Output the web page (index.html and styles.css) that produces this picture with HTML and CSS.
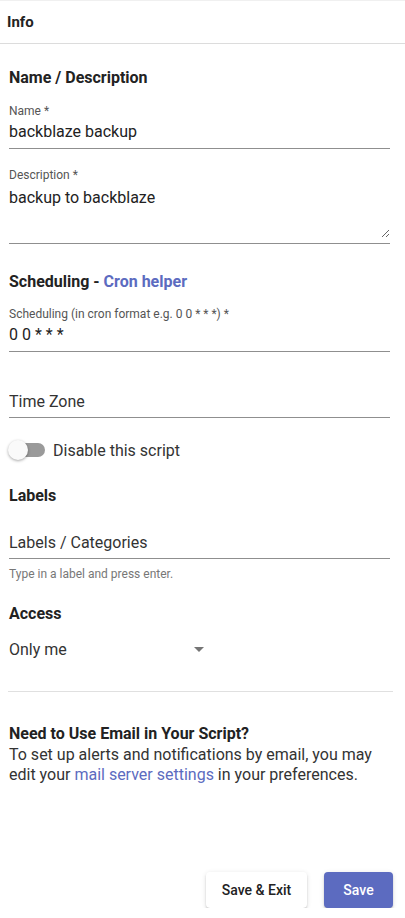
FILE: index.html
```html
<!DOCTYPE html>
<html lang="en">
<head>
  <meta charset="UTF-8">
  <meta name="viewport" content="width=device-width, initial-scale=1.0">
  <title>Script Info</title>
  <link rel="stylesheet" href="styles.css">
</head>
<body>
  <div class="header">Info</div>
  <div class="form">
    <h2 class="section-title first">Name / Description</h2>

    <div class="field field-name">
      <label class="field-label" for="nameInput">Name *</label>
      <input id="nameInput" class="field-input" type="text" value="backblaze backup">
    </div>

    <div class="field field-desc">
      <label class="field-label" for="descInput">Description *</label>
      <textarea id="descInput" class="field-textarea">backup to backblaze</textarea>
    </div>

    <h2 class="section-title sched-title">Scheduling - <a href="#" class="link">Cron helper</a></h2>

    <div class="field field-sched">
      <label class="field-label" for="cronInput">Scheduling (in cron format e.g. 0 0 * * *) *</label>
      <input id="cronInput" class="field-input" type="text" value="0 0 * * *">
    </div>

    <div class="field field-tz">
      <input class="field-input" type="text" placeholder="Time Zone">
    </div>

    <label class="switch-row">
      <span class="switch">
        <span class="switch-track"></span>
        <span class="switch-thumb"></span>
      </span>
      <span>Disable this script</span>
    </label>

    <h2 class="section-title labels-title">Labels</h2>

    <div class="field field-labels">
      <input class="field-input" type="text" placeholder="Labels / Categories">
    </div>
    <div class="helper">Type in a label and press enter.</div>

    <h2 class="section-title access-title">Access</h2>

    <div class="select">
      <span>Only me</span>
      <span class="select-arrow"></span>
    </div>

    <hr class="divider">

    <h3 class="email-title">Need to Use Email in Your Script?</h3>
    <p class="email-text">To set up alerts and notifications by email, you may edit your <a href="#" class="link-plain">mail server settings</a> in your preferences.</p>

    <div class="actions">
      <button class="btn btn-light">Save &amp; Exit</button>
      <button class="btn btn-primary">Save</button>
    </div>
  </div>
</body>
</html>
```
FILE: styles.css
```css
/* General */
body {
  margin: 0;
  font-family: Roboto, "Liberation Sans", Arial, sans-serif;
  color: #222;
  background: #fff;
  border-top: 1px solid #f0f0f0;
}

.header {
  height: 42px;
  padding: 0 7px;
  display: flex;
  align-items: center;
  font-size: 15px;
  font-weight: 700;
  color: #222;
  border-bottom: 1px solid #dcdcdc;
}

.form {
  padding: 0 15px 0 9px;
}

/* Section headings */
.section-title {
  margin: 0;
  font-size: 16px;
  line-height: 24px;
  font-weight: 700;
  color: #222;
}

.section-title.first { margin-top: 22px; }
.sched-title { margin-top: 26px; }
.labels-title { margin-top: 22px; }
.access-title { margin-top: 21px; }

.link {
  color: #5c6bc0;
  text-decoration: none;
}

/* Text fields */
.field {
  display: flex;
  flex-direction: column;
  border-bottom: 1px solid #8f8f8f;
  padding-bottom: 6px;
}

.field-label {
  font-size: 12px;
  line-height: 16px;
  color: #555;
}

.field-input,
.field-textarea {
  border: none;
  outline: none;
  padding: 0;
  margin: 3px 0 0;
  font-family: inherit;
  font-size: 16px;
  line-height: 20px;
  height: 20px;
  color: #222;
  background: transparent;
}

.field-input::placeholder {
  color: #333;
  opacity: 1;
}

.field-textarea {
  margin-top: 5px;
  height: 50px;
  resize: vertical;
}

.field-name { margin-top: 13px; }
.field-desc { margin-top: 18px; padding-bottom: 5px; }
.field-sched { margin-top: 12px; }
.field-tz { margin-top: 40px; padding-bottom: 5px; }
.field-tz .field-input { margin-top: 0; }
.field-labels { margin-top: 25px; padding-bottom: 5px; }
.field-labels .field-input { margin-top: 0; }

.helper {
  margin-top: 8px;
  font-size: 12px;
  line-height: 14px;
  color: #777;
}

/* Switch */
.switch-row {
  display: flex;
  align-items: center;
  margin-top: 20px;
  height: 24px;
  font-size: 16px;
  color: #333;
}

.switch {
  position: relative;
  width: 37px;
  height: 24px;
  margin-right: 7px;
}

.switch-track {
  position: absolute;
  left: 1px;
  top: 5px;
  width: 35px;
  height: 14px;
  border-radius: 7px;
  background: #9a9a9a;
}

.switch-thumb {
  position: absolute;
  left: -1px;
  top: 2px;
  width: 20px;
  height: 20px;
  border-radius: 50%;
  background: #fafafa;
  box-shadow: 0 1px 3px rgba(0, 0, 0, 0.35);
}

/* Select */
.select {
  margin-top: 13px;
  width: 200px;
  height: 20px;
  display: flex;
  justify-content: space-between;
  align-items: center;
  font-size: 16px;
  color: #333;
}

.select-arrow {
  width: 0;
  height: 0;
  margin-right: 5px;
  border-left: 5px solid transparent;
  border-right: 5px solid transparent;
  border-top: 5px solid #757575;
}

.divider {
  margin: 32px -3px 0 -1px;
  border: none;
  border-top: 1px solid #e0e0e0;
}

/* Email note */
.email-title {
  margin: 32px 0 0;
  font-size: 16px;
  line-height: 20px;
  font-weight: 700;
  color: #222;
}

.email-text {
  margin: 1px 0 0;
  font-size: 16px;
  line-height: 20px;
  color: #333;
}

.link-plain {
  color: #5c6bc0;
  text-decoration: none;
}

/* Buttons */
.actions {
  display: flex;
  justify-content: flex-end;
  gap: 17px;
  margin: 87px -3px 0 0;
}

.btn {
  height: 36px;
  border: none;
  border-radius: 4px;
  font-family: inherit;
  font-size: 14px;
  font-weight: 500;
  cursor: pointer;
  box-shadow: 0 3px 1px -2px rgba(0, 0, 0, 0.2), 0 2px 2px 0 rgba(0, 0, 0, 0.14), 0 1px 5px 0 rgba(0, 0, 0, 0.12);
}

.btn-light {
  width: 101px;
  background: #fff;
  color: #222;
}

.btn-primary {
  width: 69px;
  background: #5c6bc0;
  color: #fff;
}
```
